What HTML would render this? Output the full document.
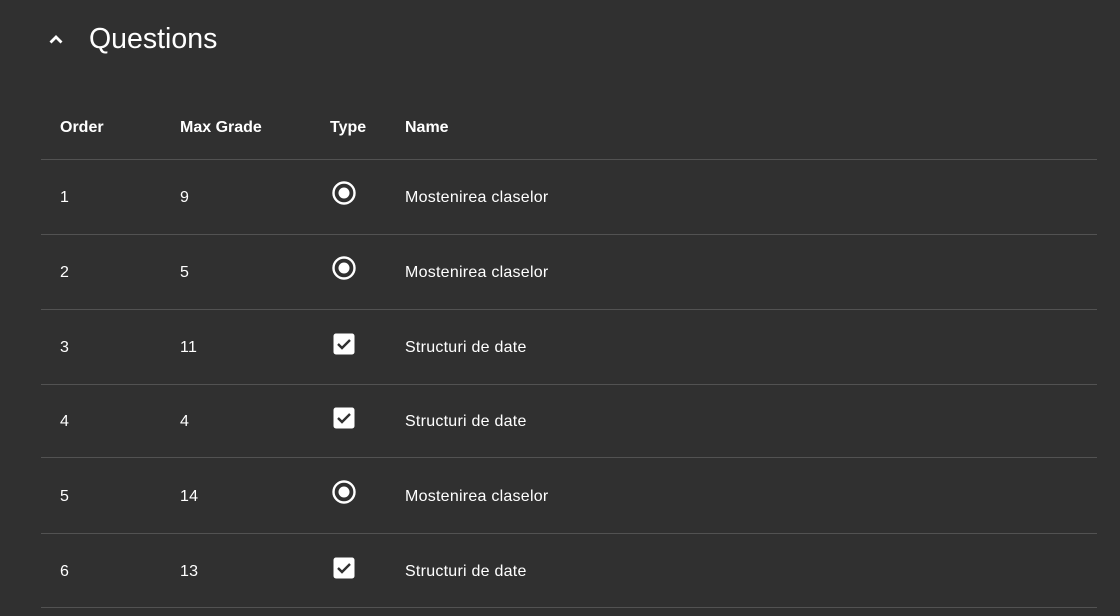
<!DOCTYPE html>
<html><head><style>
body{margin:0;background:#303030;width:1120px;height:616px;overflow:hidden;font-family:"Liberation Sans",sans-serif;color:#fff;position:relative}
.t{position:absolute;left:89px;top:21px;font-size:28.5px;line-height:36px}
.chev{position:absolute;left:46px;top:30px}
.row{position:absolute;left:41px;width:1056px;border-bottom:1px solid #525252;height:74px}
.c{position:absolute;top:1px;line-height:74px;font-size:16px;letter-spacing:0.25px}
.h .c{font-weight:bold;font-size:16px;letter-spacing:0;top:3px}
.ic{position:absolute}
</style></head><body>
<svg class="chev" width="20" height="20" viewBox="0 0 20 20"><path d="M4.5 12.5 L10 7 L15.5 12.5" stroke="#fff" stroke-width="2.8" fill="none"/></svg>
<div class="t">Questions</div>
<div class="row h" style="top:88px;height:71px"><div class="c" style="left:19px">Order</div><div class="c" style="left:139px">Max Grade</div><div class="c" style="left:289px">Type</div><div class="c" style="left:364px">Name</div></div>
<div class="row" style="top:160px"><div class="c" style="left:19px">1</div><div class="c" style="left:139px">9</div><svg class="ic" width="26" height="26" viewBox="0 0 26 26" style="left:290px;top:20px"><circle cx="13" cy="13" r="10.5" stroke="#fff" stroke-width="2.4" fill="none"/><circle cx="13" cy="13" r="5.5" fill="#fff"/></svg><div class="c" style="left:364px">Mostenirea claselor</div></div>
<div class="row" style="top:235px"><div class="c" style="left:19px">2</div><div class="c" style="left:139px">5</div><svg class="ic" width="26" height="26" viewBox="0 0 26 26" style="left:290px;top:20px"><circle cx="13" cy="13" r="10.5" stroke="#fff" stroke-width="2.4" fill="none"/><circle cx="13" cy="13" r="5.5" fill="#fff"/></svg><div class="c" style="left:364px">Mostenirea claselor</div></div>
<div class="row" style="top:310px"><div class="c" style="left:19px">3</div><div class="c" style="left:139px">11</div><svg class="ic" width="24" height="24" viewBox="0 0 24 24" style="left:291px;top:22px"><rect x="1.5" y="1.5" width="21" height="21" rx="2.5" fill="#fff"/><path d="M6 12 L10 16 L18 8" stroke="#303030" stroke-width="2.4" fill="none"/></svg><div class="c" style="left:364px">Structuri de date</div></div>
<div class="row" style="top:384px;height:73px"><div class="c" style="left:19px">4</div><div class="c" style="left:139px">4</div><svg class="ic" width="24" height="24" viewBox="0 0 24 24" style="left:291px;top:22px"><rect x="1.5" y="1.5" width="21" height="21" rx="2.5" fill="#fff"/><path d="M6 12 L10 16 L18 8" stroke="#303030" stroke-width="2.4" fill="none"/></svg><div class="c" style="left:364px">Structuri de date</div></div>
<div class="row" style="top:459px"><div class="c" style="left:19px">5</div><div class="c" style="left:139px">14</div><svg class="ic" width="26" height="26" viewBox="0 0 26 26" style="left:290px;top:20px"><circle cx="13" cy="13" r="10.5" stroke="#fff" stroke-width="2.4" fill="none"/><circle cx="13" cy="13" r="5.5" fill="#fff"/></svg><div class="c" style="left:364px">Mostenirea claselor</div></div>
<div class="row" style="top:534px;height:73px"><div class="c" style="left:19px">6</div><div class="c" style="left:139px">13</div><svg class="ic" width="24" height="24" viewBox="0 0 24 24" style="left:291px;top:22px"><rect x="1.5" y="1.5" width="21" height="21" rx="2.5" fill="#fff"/><path d="M6 12 L10 16 L18 8" stroke="#303030" stroke-width="2.4" fill="none"/></svg><div class="c" style="left:364px">Structuri de date</div></div>
</body></html>
